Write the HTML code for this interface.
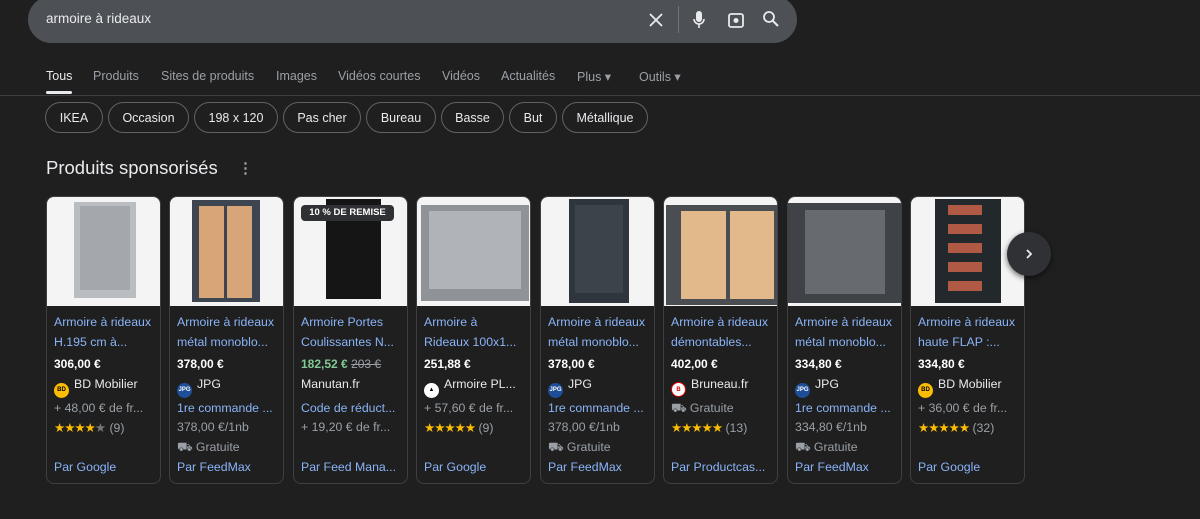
<!DOCTYPE html><html><head><meta charset="utf-8"><style>
body{margin:0;background:#1f1f1f;width:1200px;height:519px;overflow:hidden;font-family:"Liberation Sans",sans-serif;position:relative}
.a{position:absolute}
.sb{left:28px;top:-4px;width:769px;height:47px;background:#4d5156;border-radius:24px}
.sb .q{position:absolute;left:18px;top:15px;color:#e8eaed;font-size:13.5px}
.tab{top:69px;font-size:12.5px;color:#9aa0a6}
.chip{top:102px;height:31px;border:1px solid #5f6368;border-radius:16px;color:#e8eaed;font-size:12.5px;line-height:31px;text-align:center;box-sizing:border-box}
.card{top:196px;width:115px;height:288px;border:1px solid #3c4043;border-radius:8px;box-sizing:border-box;overflow:hidden;background:#1f1f1f}
.img{position:absolute;left:0;top:0;width:115px;height:109px;background:#f4f4f4}
.l{position:absolute;left:7px;width:104px;white-space:nowrap;overflow:hidden;font-size:12.3px;color:#9aa0a6}
.lk{color:#8ab4f8}.w{color:#e8eaed}.b{color:#fff;font-weight:bold;font-size:12px}
.r0{top:118px}.r1{top:138px}.r2{top:160px}.r3{top:180px}.r4{top:204px}.r5{top:223px}.r6{top:243px}.r7{top:263px}
.st{color:#fbbc04;font-size:12.5px;letter-spacing:-1px}
.ic{display:inline-block;width:15px;height:15px;border-radius:50%;vertical-align:-3px;margin-right:5px;font-size:6px;text-align:center;line-height:15px;font-weight:bold}
.cab{position:absolute}
</style></head><body>
<div class="a sb"><span class="q">armoire à rideaux</span>
<svg class="a" style="left:620px;top:16px" width="16" height="16" viewBox="0 0 16 16"><path d="M2 2L14 14M14 2L2 14" stroke="#e8eaed" stroke-width="1.8"/></svg>
<div class="a" style="left:650px;top:10px;width:1px;height:27px;background:#70757a"></div>
<svg class="a" style="left:664px;top:14px" width="14" height="20" viewBox="0 0 14 20"><rect x="4" y="1" width="6" height="11" rx="3" fill="#e8eaed"/><path d="M2 9a5 5 0 0 0 10 0M7 14v4" stroke="#e8eaed" stroke-width="1.6" fill="none"/></svg>
<svg class="a" style="left:698px;top:14px" width="20" height="20" viewBox="0 0 20 20"><rect x="3" y="4" width="14" height="13" rx="2" stroke="#e8eaed" stroke-width="1.8" fill="none"/><circle cx="10" cy="10.5" r="2.5" fill="#e8eaed"/></svg>
<svg class="a" style="left:734px;top:14px" width="18" height="18" viewBox="0 0 18 18"><circle cx="7" cy="7" r="5" stroke="#e8eaed" stroke-width="1.8" fill="none"/><path d="M11 11L16 16" stroke="#e8eaed" stroke-width="2"/></svg>
</div>
<div class="a tab" style="left:46px;color:#e8eaed">Tous</div>
<div class="a" style="left:46px;top:91px;width:26px;height:3px;background:#e8eaed;border-radius:2px"></div>
<div class="a tab" style="left:93px">Produits</div>
<div class="a tab" style="left:161px">Sites de produits</div>
<div class="a tab" style="left:276px">Images</div>
<div class="a tab" style="left:338px">Vidéos courtes</div>
<div class="a tab" style="left:442px">Vidéos</div>
<div class="a tab" style="left:501px">Actualités</div>
<div class="a tab" style="left:577px">Plus ▾</div>
<div class="a tab" style="left:639px">Outils ▾</div>
<div class="a" style="left:0;top:95px;width:1200px;height:1px;background:#3c4043"></div>
<div class="a chip" style="left:45px;width:58px">IKEA</div>
<div class="a chip" style="left:108px;width:81px">Occasion</div>
<div class="a chip" style="left:194px;width:84px">198 x 120</div>
<div class="a chip" style="left:283px;width:78px">Pas cher</div>
<div class="a chip" style="left:366px;width:70px">Bureau</div>
<div class="a chip" style="left:441px;width:63px">Basse</div>
<div class="a chip" style="left:509px;width:48px">But</div>
<div class="a chip" style="left:562px;width:86px">Métallique</div>
<div class="a" style="left:46px;top:157px;font-size:18.5px;color:#e8eaed">Produits sponsorisés</div>
<div class="a" style="left:238px;top:159px;font-size:15px;color:#9aa0a6;font-weight:bold">⋮</div>

<div class="a card" style="left:46px"><div class="img"><div class="cab" style="left:27px;top:5px;width:62px;height:96px;background:#b9bcc0"></div><div class="cab" style="left:33px;top:9px;width:50px;height:84px;background:#a4a8ad"></div></div>
<div class="l r0 lk">Armoire à rideaux</div><div class="l r1 lk">H.195 cm à...</div><div class="l r2 b">306,00 €</div>
<div class="l r3 w"><span class="ic" style="background:#fbbc04;color:#000">BD</span>BD Mobilier</div><div class="l r4">+ 48,00 € de fr...</div>
<div class="l r5"><span class="st">★★★★</span><span style="color:#777;font-size:12.5px">★</span> (9)</div><div class="l r7 lk">Par Google</div></div>

<div class="a card" style="left:169px"><div class="img"><div class="cab" style="left:22px;top:3px;width:68px;height:102px;background:#3d4650"></div><div class="cab" style="left:29px;top:9px;width:25px;height:92px;background:#d8a579"></div><div class="cab" style="left:57px;top:9px;width:25px;height:92px;background:#d8a579"></div></div>
<div class="l r0 lk">Armoire à rideaux</div><div class="l r1 lk">métal monoblo...</div><div class="l r2 b">378,00 €</div>
<div class="l r3 w"><span class="ic" style="background:#1f4e99;color:#fff">JPG</span>JPG</div><div class="l r4 lk">1re commande ...</div>
<div class="l r5">378,00 €/1nb</div><div class="l r6">⛟ Gratuite</div><div class="l r7 lk">Par FeedMax</div></div>

<div class="a card" style="left:293px"><div class="img"><div class="cab" style="left:32px;top:2px;width:55px;height:100px;background:#151515"></div><div class="a" style="left:7px;top:8px;width:93px;height:16px;background:#303134;border-radius:4px;color:#fff;font-size:9.5px;font-weight:bold;text-align:center;line-height:16px">10 % DE REMISE</div></div>
<div class="l r0 lk">Armoire Portes</div><div class="l r1 lk">Coulissantes N...</div><div class="l r2 b"><span style="color:#81c995">182,52 €</span> <span style="color:#9aa0a6;font-weight:normal;text-decoration:line-through">203 €</span></div>
<div class="l r3 w">Manutan.fr</div><div class="l r4 lk">Code de réduct...</div>
<div class="l r5">+ 19,20 € de fr...</div><div class="l r7 lk">Par Feed Mana...</div></div>

<div class="a card" style="left:416px"><div class="img"><div class="cab" style="left:4px;top:8px;width:108px;height:96px;background:#8f9297"></div><div class="cab" style="left:12px;top:14px;width:92px;height:78px;background:#b0b3b7"></div></div>
<div class="l r0 lk">Armoire à</div><div class="l r1 lk">Rideaux 100x1...</div><div class="l r2 b">251,88 €</div>
<div class="l r3 w"><span class="ic" style="background:#fff;color:#000">▲</span>Armoire PL...</div><div class="l r4">+ 57,60 € de fr...</div>
<div class="l r5"><span class="st">★★★★★</span> (9)</div><div class="l r7 lk">Par Google</div></div>

<div class="a card" style="left:540px"><div class="img"><div class="cab" style="left:28px;top:2px;width:60px;height:104px;background:#2f353c"></div><div class="cab" style="left:34px;top:8px;width:48px;height:88px;background:#3b434b"></div></div>
<div class="l r0 lk">Armoire à rideaux</div><div class="l r1 lk">métal monoblo...</div><div class="l r2 b">378,00 €</div>
<div class="l r3 w"><span class="ic" style="background:#1f4e99;color:#fff">JPG</span>JPG</div><div class="l r4 lk">1re commande ...</div>
<div class="l r5">378,00 €/1nb</div><div class="l r6">⛟ Gratuite</div><div class="l r7 lk">Par FeedMax</div></div>

<div class="a card" style="left:663px"><div class="img"><div class="cab" style="left:2px;top:8px;width:111px;height:100px;background:#4a4d52"></div><div class="cab" style="left:17px;top:14px;width:45px;height:88px;background:#e1b98a"></div><div class="cab" style="left:66px;top:14px;width:44px;height:88px;background:#e1b98a"></div></div>
<div class="l r0 lk">Armoire à rideaux</div><div class="l r1 lk">démontables...</div><div class="l r2 b">402,00 €</div>
<div class="l r3 w"><span class="ic" style="background:#fff;color:#d00;border:1px solid #d00;box-sizing:border-box">B</span>Bruneau.fr</div><div class="l r4">⛟ Gratuite</div>
<div class="l r5"><span class="st">★★★★★</span> (13)</div><div class="l r7 lk">Par Productcas...</div></div>

<div class="a card" style="left:787px"><div class="img"><div class="cab" style="left:0;top:6px;width:114px;height:100px;background:#3f4348"></div><div class="cab" style="left:17px;top:13px;width:80px;height:84px;background:#676b70"></div></div>
<div class="l r0 lk">Armoire à rideaux</div><div class="l r1 lk">métal monoblo...</div><div class="l r2 b">334,80 €</div>
<div class="l r3 w"><span class="ic" style="background:#1f4e99;color:#fff">JPG</span>JPG</div><div class="l r4 lk">1re commande ...</div>
<div class="l r5">334,80 €/1nb</div><div class="l r6">⛟ Gratuite</div><div class="l r7 lk">Par FeedMax</div></div>

<div class="a card" style="left:910px"><div class="img"><div class="cab" style="left:24px;top:2px;width:66px;height:104px;background:#23282c"></div><div class="cab" style="left:37px;top:8px;width:34px;height:92px;background:repeating-linear-gradient(#b05a45 0 10px,#23282c 10px 19px)"></div></div>
<div class="l r0 lk">Armoire à rideaux</div><div class="l r1 lk">haute FLAP :...</div><div class="l r2 b">334,80 €</div>
<div class="l r3 w"><span class="ic" style="background:#fbbc04;color:#000">BD</span>BD Mobilier</div><div class="l r4">+ 36,00 € de fr...</div>
<div class="l r5"><span class="st">★★★★★</span> (32)</div><div class="l r7 lk">Par Google</div></div>

<div class="a" style="left:1007px;top:232px;width:44px;height:44px;border-radius:50%;background:#303134;box-shadow:0 2px 6px rgba(0,0,0,.6)"><svg class="a" style="left:16px;top:15px" width="12" height="14" viewBox="0 0 12 14"><path d="M4 3L8 7L4 11" stroke="#e8eaed" stroke-width="1.8" fill="none"/></svg></div>
</body></html>
